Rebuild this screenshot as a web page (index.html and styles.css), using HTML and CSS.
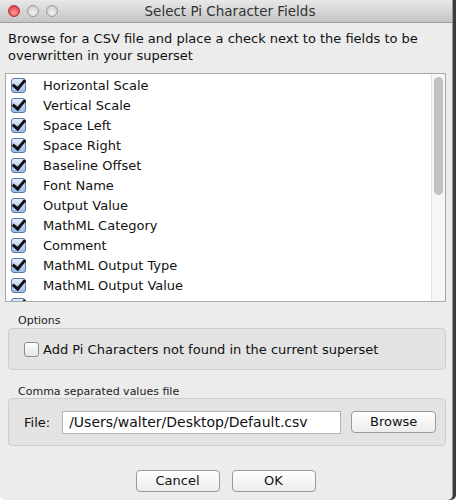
FILE: index.html
```html
<!DOCTYPE html>
<html>
<head>
<title>Select Pi Character Fields</title>
<link rel="stylesheet" href="styles.css">
</head>
<body>

<div class="window">
    <!-- Title bar -->
    <div class="titlebar">
        <div class="lights">
            <span class="light close"></span>
            <span class="light"></span>
            <span class="light"></span>
        </div>
        <div class="title">Select Pi Character Fields</div>
    </div>

    <div class="content">
        <p class="intro">Browse for a CSV file and place a check next to the fields to be overwritten in your superset</p>

        <!-- Field list -->
        <div class="list">
            <div class="rows">
                <div class="row"><span class="check"></span>Horizontal Scale</div>
                <div class="row"><span class="check"></span>Vertical Scale</div>
                <div class="row"><span class="check"></span>Space Left</div>
                <div class="row"><span class="check"></span>Space Right</div>
                <div class="row"><span class="check"></span>Baseline Offset</div>
                <div class="row"><span class="check"></span>Font Name</div>
                <div class="row"><span class="check"></span>Output Value</div>
                <div class="row"><span class="check"></span>MathML Category</div>
                <div class="row"><span class="check"></span>Comment</div>
                <div class="row"><span class="check"></span>MathML Output Type</div>
                <div class="row"><span class="check"></span>MathML Output Value</div>
                <div class="row"><span class="check"></span>Auto Range</div>
            </div>
            <div class="scrollbar"><div class="thumb"></div></div>
        </div>

        <!-- Options -->
        <div class="group-label">Options</div>
        <div class="group">
            <label class="option"><span class="box"></span>Add Pi Characters not found in the current superset</label>
        </div>

        <!-- CSV file -->
        <div class="group-label second">Comma separated values file</div>
        <div class="group file-row">
            <span>File:</span>
            <div class="field">/Users/walter/Desktop/Default.csv</div>
            <div class="button browse">Browse</div>
        </div>

        <div class="buttons">
            <div class="button">Cancel</div>
            <div class="button">OK</div>
        </div>
    </div>
</div>

</body>
</html>
```

FILE: styles.css
```css
body {
    margin: 0;
    background: #ffffff;
    font-family: "DejaVu Sans", sans-serif;
    color: #111;
}

.window {
    width: 452px;
    height: 500px;
    background: #ececec;
    border-right: 1px solid #9a9a9a;
    border-radius: 0 0 5px 5px;
    box-shadow: 3px 0 0 #3c3c3c;
    overflow: hidden;
}

.titlebar {
    height: 22px;
    display: flex;
    align-items: center;
    background: linear-gradient(#e8e8e8, #c4c4c4);
    border-bottom: 1px solid #9d9d9d;
    border-radius: 4px 4px 0 0;
}

.lights {
    display: flex;
    gap: 7px;
    padding-left: 8px;
    width: 80px;
}

.light {
    width: 12px;
    height: 12px;
    border-radius: 50%;
    background: radial-gradient(circle at 50% 65%, #f4f4f4, #c3c3c3);
    border: 1px solid #9a9a9a;
    box-sizing: border-box;
}

.light.close {
    background: radial-gradient(circle at 50% 65%, #ff9a9a, #e0262c);
    border-color: #a8353a;
}

.title {
    flex: 1;
    text-align: center;
    font-size: 13.5px;
    color: #333;
    margin-right: 80px;
}

.content {
    padding: 0 6px 0 5px;
}

.intro {
    margin: 7px 0 0 3px;
    font-size: 13px;
    line-height: 17px;
    height: 43px;
}

.list {
    height: 227px;
    background: #fff;
    border: 1px solid #a8a8a8;
    display: flex;
    overflow: hidden;
}

.rows {
    flex: 1;
    padding-top: 1px;
}

.row {
    height: 20px;
    display: flex;
    align-items: center;
    font-size: 13px;
}

.check {
    width: 13px;
    height: 13px;
    margin: 0 17px 0 5px;
    border: 1px solid #5c77a4;
    border-radius: 3px;
    background: linear-gradient(#e2eefb, #9bbde6);
    position: relative;
}

.check::after {
    content: "";
    position: absolute;
    left: 3px;
    top: -2px;
    width: 5px;
    height: 10px;
    border-right: 3px solid #111;
    border-bottom: 3px solid #111;
    transform: rotate(40deg);
}

.scrollbar {
    width: 14px;
    background: #f6f6f6;
    border-left: 1px solid #e2e2e2;
    padding: 3px 2px;
    box-sizing: border-box;
}

.thumb {
    height: 118px;
    border-radius: 5px;
    background: #c2c2c2;
}

.group-label {
    font-size: 11px;
    line-height: 13px;
    margin: 12px 0 1px 13px;
    color: #222;
}

.group-label.second {
    margin-top: 15px;
    margin-bottom: 0;
}

.group {
    margin: 0 0 0 3px;
    width: 436px;
    background: #e3e3e3;
    border: 1px solid #cdcdcd;
    border-radius: 4px;
}

.option {
    height: 40px;
    display: flex;
    align-items: center;
    font-size: 13px;
}

.box {
    width: 13px;
    height: 13px;
    margin: 0 4px 0 15px;
    border: 1px solid #8e8e8e;
    border-radius: 3px;
    background: linear-gradient(#ffffff, #e6e6e6);
}

.file-row {
    height: 46px;
    display: flex;
    align-items: center;
    font-size: 13px;
}

.file-row span {
    margin: 0 12px 0 15px;
}

.field {
    width: 271px;
    height: 21px;
    line-height: 21px;
    padding-left: 6px;
    background: #fff;
    border: 1px solid #b4b4b4;
    font-size: 14px;
    margin-right: 10px;
}

.button {
    height: 20px;
    line-height: 20px;
    text-align: center;
    font-size: 13px;
    background: linear-gradient(#ffffff, #ececec);
    border: 1px solid #9a9a9a;
    border-radius: 4px;
}

.browse {
    width: 83px;
}

.buttons {
    display: flex;
    justify-content: center;
    gap: 12px;
    margin-top: 24px;
}

.buttons .button {
    width: 82px;
}
```
